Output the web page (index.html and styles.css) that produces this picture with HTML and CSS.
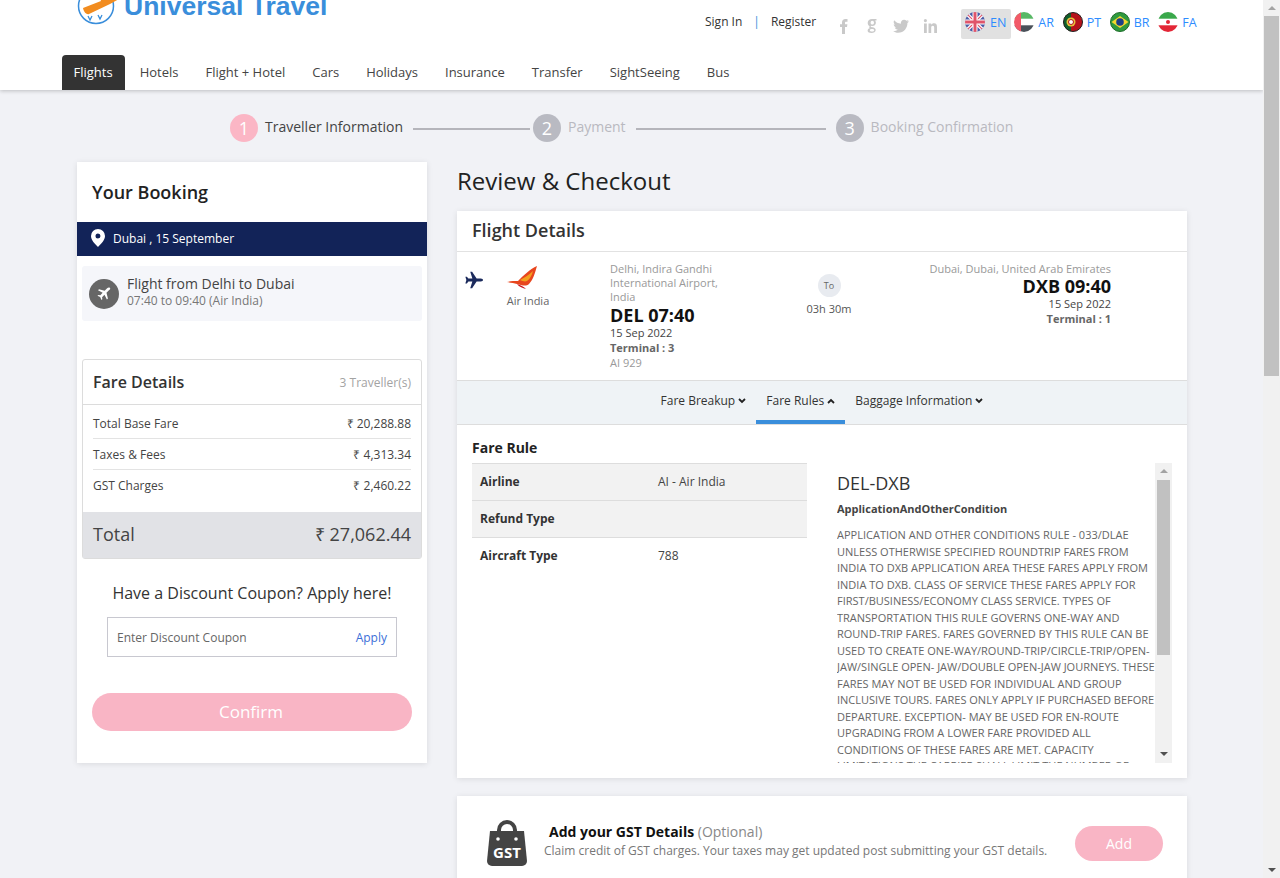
FILE: index.html
```html
<!DOCTYPE html>
<html lang="en">
<head>
<meta charset="utf-8">
<title>Review &amp; Checkout</title>
<link rel="stylesheet" href="styles.css">
</head>
<body>
<div class="page">
  <div class="main">
    <header class="header">
      <div class="top">
        <div class="logo">
          <svg class="logo-icon" width="44" height="34" viewBox="0 0 44 34"><circle cx="19" cy="15" r="17.500" fill="none" stroke="#3a8edb" stroke-width="1.500"/><path d="M11 25l2 4 2-4M21 24l2 4 2-4" fill="none" stroke="#3a8edb" stroke-width="1.300"/><path d="M6 17L24 10 22 4h5l4 4 8-3c3-1 5 1 3 3L33 13 12 23c-2 .8-5-1-6-6z" fill="#f28c1f"/></svg>
          <span class="logo-text">Universal Travel</span>
        </div>
        <div class="auth"><a>Sign In</a><span class="sep">|</span><a>Register</a></div>
        <div class="social">
          <svg width="14" height="16" viewBox="0 0 14 16"><path d="M5 16V9H3V6.300h2V4.500C5 2.300 6.300 1 8.400 1H10.500V3.700H9c-.8 0-1 .4-1 1.100V6.300h2.400L10 9H8v7z" fill="#c9c9c9"/></svg>
          <svg width="14" height="16" viewBox="0 0 14 16"><path d="M7 1H11.500V2.500H10c.6.600.9 1.400.9 2.200 0 2-1.600 3.300-3.600 3.300-.5 0-.9 0-1.300-.2-.5.400-.4 1 .2 1.200 2 .5 4.500.7 4.500 3 0 2-2 3-4.200 3-2.100 0-3.900-.7-3.900-2.500 0-1.200 1-1.900 2.100-2.200-.6-.6-.6-1.400 0-2C3.500 7.800 2.700 6.500 2.700 5 2.700 2.600 4.700 1 7 1zm.3 1.800c-1 0-1.700.8-1.700 1.900s.7 1.900 1.700 1.900 1.700-.8 1.700-1.900-.7-1.900-1.700-1.900zM7 11c-1.200 0-2.200.4-2.200 1.200S5.700 13.500 7 13.500s2.200-.5 2.200-1.300S8.300 11 7 11z" fill="#c9c9c9"/></svg>
          <svg width="16" height="16" viewBox="0 0 16 16"><path d="M16 3.300c-.6.300-1.200.4-1.900.5.700-.4 1.200-1 1.400-1.800-.6.400-1.300.6-2 .8C12.900 2.100 12 1.700 11.100 1.700c-2.100 0-3.600 1.900-3.200 4C5.200 5.600 2.800 4.300 1.100 2.300.3 3.800.7 5.700 2.100 6.700 1.600 6.700 1.100 6.500.7 6.300c0 1.500 1.100 2.900 2.600 3.200-.5.100-1 .2-1.500.1.400 1.300 1.600 2.200 3.100 2.200C3.500 12.900 1.700 13.400 0 13.200c1.500.9 3.200 1.500 5 1.500 6.100 0 9.600-5.200 9.400-9.800.7-.4 1.200-1 1.600-1.600z" fill="#c9c9c9"/></svg>
          <svg width="14" height="16" viewBox="0 0 14 16"><path d="M1 5.500h2.800V15H1zM2.400 1a1.600 1.600 0 110 3.200 1.600 1.600 0 010-3.200zM5.500 5.500h2.700v1.300c.5-.9 1.500-1.500 2.800-1.500 2.400 0 3 1.600 3 3.900V15h-2.800V9.800c0-1.200-.3-2-1.400-2-1.200 0-1.600.9-1.600 2V15H5.500z" fill="#c9c9c9"/></svg>
        </div>
        <div class="langs">
          <div class="lang active">
            <svg class="flag" width="20" height="20" viewBox="0 0 20 20"><defs><clipPath id="c1"><circle cx="10" cy="10" r="10"/></clipPath></defs><g clip-path="url(#c1)"><rect width="20" height="20" fill="#4a5ba6"/><path d="M0 0L20 20M20 0L0 20" stroke="#fff" stroke-width="3.500"/><path d="M0 0L20 20M20 0L0 20" stroke="#e0556a" stroke-width="1.200"/><path d="M10 0V20M0 10H20" stroke="#fff" stroke-width="5"/><path d="M10 0V20M0 10H20" stroke="#e0556a" stroke-width="3"/></g></svg>
            <span>EN</span>
          </div>
          <div class="lang">
            <svg class="flag" width="20" height="20" viewBox="0 0 20 20"><defs><clipPath id="c2"><circle cx="10" cy="10" r="10"/></clipPath></defs><g clip-path="url(#c2)"><rect width="20" height="20" fill="#fff"/><rect width="20" height="6.700" fill="#58b865"/><rect y="13.300" width="20" height="6.700" fill="#4a5159"/><rect width="7" height="20" fill="#f25a68"/></g></svg>
            <span>AR</span>
          </div>
          <div class="lang">
            <svg class="flag" width="20" height="20" viewBox="0 0 20 20"><defs><clipPath id="c3"><circle cx="10" cy="10" r="9.500"/></clipPath></defs><g clip-path="url(#c3)"><rect width="20" height="20" fill="#b5121b"/><rect width="8" height="20" fill="#0f5f2a"/><circle cx="8" cy="10" r="4.500" fill="#e8c33a"/><circle cx="8" cy="10" r="2.500" fill="#fff" stroke="#b5121b"/></g><circle cx="10" cy="10" r="9.500" fill="none" stroke="#222" stroke-width="1"/></svg>
            <span>PT</span>
          </div>
          <div class="lang">
            <svg class="flag" width="20" height="20" viewBox="0 0 20 20"><circle cx="10" cy="10" r="9.500" fill="#2f9a3e" stroke="#1c6b29"/><path d="M1.500 10L10 4l8.500 6L10 16z" fill="#f3d72e"/><circle cx="10" cy="10" r="3.800" fill="#1d3f87"/></svg>
            <span>BR</span>
          </div>
          <div class="lang">
            <svg class="flag" width="20" height="20" viewBox="0 0 20 20"><defs><clipPath id="c5"><circle cx="10" cy="10" r="10"/></clipPath></defs><g clip-path="url(#c5)"><rect width="20" height="20" fill="#fff"/><rect width="20" height="6.700" fill="#3aa84b"/><rect y="13.300" width="20" height="6.700" fill="#e32636"/><circle cx="10" cy="10" r="2" fill="#e32636"/></g></svg>
            <span>FA</span>
          </div>
        </div>
      </div>
      <nav class="nav">
        <a class="nav-item active">Flights</a>
        <a class="nav-item">Hotels</a>
        <a class="nav-item">Flight + Hotel</a>
        <a class="nav-item">Cars</a>
        <a class="nav-item">Holidays</a>
        <a class="nav-item">Insurance</a>
        <a class="nav-item">Transfer</a>
        <a class="nav-item">SightSeeing</a>
        <a class="nav-item">Bus</a>
      </nav>
    </header>

    <div class="stepper">
      <div class="step current"><span class="num">1</span><span class="label">Traveller Information</span></div>
      <div class="line l1"></div>
      <div class="step"><span class="num">2</span><span class="label">Payment</span></div>
      <div class="line l2"></div>
      <div class="step"><span class="num">3</span><span class="label">Booking Confirmation</span></div>
    </div>

    <div class="content">
      <aside class="booking">
        <h2 class="booking-title">Your Booking</h2>
        <div class="dest">
          <svg width="14" height="18" viewBox="0 0 14 18"><path fill-rule="evenodd" d="M7 0a7 7 0 017 7c0 4-4 8-7 11C4 15 0 11 0 7a7 7 0 017-7zm0 4.500a2.500 2.500 0 100 5 2.500 2.500 0 000-5z" fill="#fff"/></svg>
          <span>Dubai , 15 September</span>
        </div>
        <div class="trip">
          <span class="trip-icon"><svg width="16" height="16" viewBox="0 0 24 24"><path d="M21 3c-1-1-3-.8-4.300.5L13 7.200 4.500 5 3 6.500l7 3.700-3.500 3.600-3-.4L2.200 14.700l4 1.900L8.200 21l1.300-1.300-.4-3 3.600-3.500 3.700 7 1.500-1.500-2.200-8.500 3.700-3.700C20.800 5.800 22 4 21 3z" fill="#fff"/></svg></span>
          <div class="trip-info">
            <div class="trip-title">Flight from Delhi to Dubai</div>
            <div class="trip-sub">07:40 to 09:40 (Air India)</div>
          </div>
        </div>
        <div class="fare">
          <div class="fare-head"><span class="fare-title">Fare Details</span><span class="fare-count">3 Traveller(s)</span></div>
          <div class="fare-rows">
            <div class="fare-row"><span>Total Base Fare</span><span>₹ 20,288.88</span></div>
            <div class="fare-row"><span>Taxes &amp; Fees</span><span>₹ 4,313.34</span></div>
            <div class="fare-row"><span>GST Charges</span><span>₹ 2,460.22</span></div>
          </div>
          <div class="fare-total"><span>Total</span><span class="total-amt">₹ 27,062.44</span></div>
        </div>
        <div class="coupon-title">Have a Discount Coupon? Apply here!</div>
        <div class="coupon"><span>Enter Discount Coupon</span><a>Apply</a></div>
        <button class="confirm">Confirm</button>
      </aside>

      <section class="checkout">
        <h1 class="page-title">Review &amp; Checkout</h1>
        <div class="card details">
          <h2 class="details-title">Flight Details</h2>
          <div class="flight">
            <svg class="plane" width="20" height="18" viewBox="0 0 24 24"><path d="M24 12c0-1-1-2-3-2h-5.500L9.500 1H7l2.800 9H4.500L2.500 7.500H.5L1.800 12 .5 16.500h2L4.500 14h5.300L7 23h2.500l6-9H21c2 0 3-1 3-2z" fill="#1b2a5c"/></svg>
            <div class="airline">
              <svg width="30" height="24" viewBox="0 0 30 24"><path d="M30 0C28 7 26 14 22 18c-3 3-8 1-12 0-3-1-6-1-10-2 4-1 7-1 11-1C17 9 23 3 30 0z" fill="#e8461e"/><path d="M26 5c-1 4-3 8-6 10-2 1-5 0-7-1 4-2 9-5 13-9z" fill="#f3a01e"/><path d="M10 18c4 1 7 3 9 5-3-1-7-2-9-5z" fill="#c9141c"/></svg>
              <span>Air India</span>
            </div>
            <div class="from">
              <div class="airport">Delhi, Indira Gandhi International Airport, India</div>
              <div class="time">DEL 07:40</div>
              <div class="date">15 Sep 2022</div>
              <div class="terminal">Terminal : 3</div>
              <div class="fno">AI 929</div>
            </div>
            <div class="mid"><span class="to">To</span><span class="dur">03h 30m</span></div>
            <div class="dest-col">
              <div class="airport">Dubai, Dubai, United Arab Emirates</div>
              <div class="time">DXB 09:40</div>
              <div class="date">15 Sep 2022</div>
              <div class="terminal">Terminal : 1</div>
            </div>
          </div>
          <div class="tabs">
            <a class="tab">Fare Breakup <svg width="8" height="6" viewBox="0 0 8 6"><path d="M1 1l3 3 3-3" fill="none" stroke="#222" stroke-width="1.800"/></svg></a>
            <a class="tab active">Fare Rules <svg width="8" height="6" viewBox="0 0 8 6"><path d="M1 5l3-3 3 3" fill="none" stroke="#222" stroke-width="1.800"/></svg></a>
            <a class="tab">Baggage Information <svg width="8" height="6" viewBox="0 0 8 6"><path d="M1 1l3 3 3-3" fill="none" stroke="#222" stroke-width="1.800"/></svg></a>
          </div>
          <div class="rules">
            <h3 class="rules-title">Fare Rule</h3>
            <div class="rules-body">
              <div class="rule-table">
                <div class="rule-row shade"><b>Airline</b><span>AI - Air India</span></div>
                <div class="rule-row shade"><b>Refund Type</b><span></span></div>
                <div class="rule-row"><b>Aircraft Type</b><span>788</span></div>
              </div>
              <div class="rule-text">
                <div class="rule-scroll">
                  <div class="route">DEL-DXB</div>
                  <div class="cond">ApplicationAndOtherCondition</div>
                  <p class="para">APPLICATION AND OTHER CONDITIONS RULE - 033/DLAE UNLESS OTHERWISE SPECIFIED ROUNDTRIP FARES FROM INDIA TO DXB APPLICATION AREA THESE FARES APPLY FROM INDIA TO DXB. CLASS OF SERVICE THESE FARES APPLY FOR FIRST/BUSINESS/ECONOMY CLASS SERVICE. TYPES OF TRANSPORTATION THIS RULE GOVERNS ONE-WAY AND ROUND-TRIP FARES. FARES GOVERNED BY THIS RULE CAN BE USED TO CREATE ONE-WAY/ROUND-TRIP/CIRCLE-TRIP/OPEN-JAW/SINGLE OPEN- JAW/DOUBLE OPEN-JAW JOURNEYS. THESE FARES MAY NOT BE USED FOR INDIVIDUAL AND GROUP INCLUSIVE TOURS. FARES ONLY APPLY IF PURCHASED BEFORE DEPARTURE. EXCEPTION- MAY BE USED FOR EN-ROUTE UPGRADING FROM A LOWER FARE PROVIDED ALL CONDITIONS OF THESE FARES ARE MET. CAPACITY LIMITATIONS THE CARRIER SHALL LIMIT THE NUMBER OF</p>
                </div>
                <div class="sbar small">
                  <span class="arrow up"></span>
                  <div class="thumb-track"><div class="thumb"></div></div>
                  <span class="arrow down"></span>
                </div>
              </div>
            </div>
          </div>
        </div>
        <div class="card gst">
          <svg class="gst-icon" width="40" height="46" viewBox="0 0 40 46"><path d="M10 13V10a10 10 0 0120 0v3h-4V10a6 6 0 00-12 0v3z" fill="#444"/><path d="M3 11h34l3 30a5 5 0 01-5 5H5a5 5 0 01-5-5z" fill="#444"/><circle cx="11" cy="19" r="1.800" fill="#fff"/><circle cx="29" cy="19" r="1.800" fill="#fff"/><text x="20" y="38" text-anchor="middle" class="gst-label">GST</text></svg>
          <div class="gst-text">
            <div class="gst-title"><b>Add your GST Details</b> <span>(Optional)</span></div>
            <div class="gst-sub">Claim credit of GST charges. Your taxes may get updated post submitting your GST details.</div>
          </div>
          <button class="add">Add</button>
        </div>
      </section>
    </div>
  </div>
  <div class="sbar page-bar">
    <span class="arrow up"></span>
    <div class="thumb-track"><div class="thumb"></div></div>
    <span class="arrow down"></span>
  </div>
</div>
</body>
</html>
```
FILE: styles.css
```css
* { box-sizing: border-box; }
html, body { margin: 0; height: 100%; overflow: hidden; }
body { font-family: "Open Sans", "Liberation Sans", sans-serif; color: #333; background: #f1f2f6; }
h1, h2, h3, p { margin: 0; font-weight: 400; }
a { color: inherit; text-decoration: none; }
button { font-family: inherit; border: 0; }

.page { display: flex; height: 878px; overflow: hidden; }
.main { flex: 1; min-width: 0; height: 878px; overflow: hidden; }

.header { height: 90px; background: #fff; box-shadow: 0 1px 4px rgba(0,0,0,.22); position: relative; overflow: hidden; }
.top { height: 55px; padding-left: 77px; display: flex; align-items: flex-start; }
.logo { display: flex; align-items: flex-start; width: 530px; margin-top: -9px; height: 34px; }
.logo-icon { flex: none; }
.logo-text { margin: -2px 0 0 3px; font: 700 26.500px/34px "Liberation Sans", sans-serif; color: #3a8edb; white-space: nowrap; }
.auth { display: flex; gap: 10px; width: 132px; padding-top: 13px; margin-left: 98px; font-size: 12px; line-height: 17px; color: #333; }
.auth .sep { color: #3a8edb; margin: 0 1px; }
.social { display: flex; gap: 14px; padding-top: 18px; width: 124px; }
.social svg { flex: none; }
.langs { display: flex; padding-top: 9px; }
.lang { display: flex; align-items: center; gap: 4px; height: 30px; padding: 0 0 4px; margin-right: 8.700px; font-size: 12.500px; color: #2d8cff; }
.lang.active { background: #e1e1e1; padding: 0 5px 4px 4px; border-radius: 2px; margin-right: 3px; gap: 5px; }
.flag { flex: none; }

.nav { height: 35px; padding-left: 62px; display: flex; }
.nav-item { padding: 0 12px 0 11px; margin-right: 4px; line-height: 35px; font-size: 13px; color: #444; }
.nav-item.active { background: #333; color: #fff; border-radius: 4px 4px 0 0; padding: 0 12px 0 11.500px; margin-right: 4px; }

.stepper { display: flex; align-items: center; height: 30px; margin-top: 23px; padding-left: 230px; }
.step { display: flex; align-items: center; gap: 7px; font-size: 14px; color: #b9b9c0; white-space: nowrap; }
.step .label { margin-bottom: 3px; }
.step .num { width: 28px; height: 28px; border-radius: 50%; background: #b9bac2; color: #fff; font-size: 18px; line-height: 28px; text-align: center; }
.step.current .num { background: #fbb6c5; }
.step.current { color: #444; }
.line { height: 2px; background: #b5b5bb; margin: 2px 3px 0 10px; }
.l1 { width: 117px; }
.l2 { width: 190px; margin-left: 10px; margin-right: 10px; }

.content { display: flex; gap: 30px; padding: 19px 76px 0 77px; align-items: flex-start; }
.booking { flex: none; width: 350px; height: 601px; background: #fff; box-shadow: 0 1px 6px rgba(0,0,0,.1); }
.booking-title { font-size: 18px; font-weight: 600; line-height: 24px; color: #222; padding: 18px 15px 0; height: 60px; }
.dest { height: 34px; background: #122358; color: #fff; font-size: 12px; display: flex; align-items: center; gap: 8px; padding-left: 14px; }
.dest span { margin-bottom: 2px; }
.dest svg { margin-bottom: 2px; }
.trip { margin: 10px 5px 0; height: 55px; background: #f5f6fa; border-radius: 3px; display: flex; align-items: center; gap: 8px; padding-left: 7px; }
.trip-info { margin-bottom: 4px; }
.trip-icon { width: 30px; height: 30px; border-radius: 50%; background: #666; display: flex; align-items: center; justify-content: center; flex: none; }
.trip-title { font-size: 14px; line-height: 18px; color: #444; }
.trip-sub { font-size: 12px; line-height: 16px; color: #777; }
.fare { margin: 38px 5px 0; height: 200px; border: 1px solid #dcdcdc; border-radius: 3px; }
.fare-head { height: 45px; display: flex; justify-content: space-between; align-items: center; padding: 0 10px; border-bottom: 1px solid #dcdcdc; }
.fare-title { font-size: 16px; font-weight: 600; color: #333; }
.fare-count { font-size: 12px; color: #a3a3a3; }
.fare-rows { padding: 3px 10px 0; height: 107px; }
.fare-row { height: 31px; display: flex; justify-content: space-between; align-items: center; font-size: 12px; color: #444; border-bottom: 1px solid #e3e3e3; }
.fare-row:last-child { border-bottom: 0; }
.fare-total { height: 46px; background: #e1e2e6; display: flex; justify-content: space-between; align-items: center; padding: 0 10px 2px; font-size: 18px; color: #444; }
.total-amt { font-size: 18px; }
.coupon-title { margin-top: 23px; text-align: center; font-size: 16px; line-height: 22px; color: #333; }
.coupon { margin: 13px 30px 0; height: 40px; border: 1px solid #c8c8d0; display: flex; justify-content: space-between; align-items: center; padding: 0 9px; font-size: 12px; color: #666; }
.coupon a { color: #3b6fd8; }
.confirm { display: block; width: 320px; height: 38px; margin: 36px 15px 0; padding: 0 2px 2px 0; border-radius: 19px; background: #f9b5c5; color: #fff; font-size: 17px; }

.checkout { flex: 1; min-width: 0; }
.page-title { font-size: 24px; line-height: 38px; height: 49px; color: #222; }
.card { background: #fff; box-shadow: 0 1px 6px rgba(0,0,0,.1); }
.details { height: 567px; overflow: hidden; }
.details-title { height: 41px; padding: 7px 15px 0; font-size: 18px; font-weight: 600; line-height: 24px; color: #333; border-bottom: 1px solid #e2e2e2; }
.flight { height: 128px; display: flex; }
.plane { margin: 19px 0 0 7px; flex: none; }
.airline { width: 60px; margin: 14px 0 0 14px; display: flex; flex-direction: column; align-items: center; flex: none; font-size: 11px; color: #666; }
.airline svg { align-self: flex-start; margin-left: 9px; }
.airline span { margin-top: 3px; }
.from { width: 125px; margin: 10px 0 0 52px; flex: none; color: #555; }
.airport { font-size: 11px; line-height: 14px; color: #999; }
.time { font-size: 18px; font-weight: 700; line-height: 22px; color: #111; }
.date { font-size: 11px; line-height: 15px; color: #444; white-space: nowrap; }
.from .date { margin-top: -1px; }
.dest-col .time { margin-top: -1px; }
.dest-col .date { line-height: 14px; }
.terminal { font-size: 11px; font-weight: 700; line-height: 15px; color: #666; }
.fno { font-size: 11px; line-height: 15px; color: #999; }
.mid { width: 90px; margin: 22px 0 0 49px; display: flex; flex-direction: column; align-items: center; flex: none; }
.to { width: 23px; height: 23px; border-radius: 50%; background: #e8ebf0; font-size: 9px; line-height: 23px; text-align: center; color: #666; }
.dur { font-size: 11px; line-height: 15px; color: #555; margin-top: 4px; }
.dest-col { flex: 1; margin: 10px 76px 0 0; text-align: right; }
.tabs { height: 45px; background: #eff3f6; border-top: 1px solid #ddd; border-bottom: 1px solid #ddd; display: flex; justify-content: center; }
.tab { height: 43px; padding: 0 10px; line-height: 39px; font-size: 12px; color: #333; }
.tab svg { vertical-align: 1px; }
.tab.active { border-bottom: 4px solid #3a8edb; }
.rules { padding: 13px 15px 0; height: 353px; overflow: hidden; }
.rules-title { font-size: 14px; font-weight: 700; line-height: 20px; color: #222; height: 25px; }
.rules-body { display: flex; gap: 30px; }
.rule-table { flex: none; width: 335px; }
.rule-row { height: 37px; display: flex; align-items: center; font-size: 12px; color: #444; padding: 0 0 2px 8px; border-bottom: 1px solid #ddd; }
.rule-row.shade { background: #f2f2f2; }
.rule-row:first-child { border-top: 1px solid #ddd; height: 38px; }
.rule-row:last-child { border-bottom: 0; background: #fff; }
.rule-row b { width: 178px; font-weight: 700; color: #333; }
.rule-text { flex: 1; display: flex; height: 300px; min-width: 0; }
.rule-scroll { flex: 1; height: 300px; overflow: hidden; min-width: 0; }
.route { font-size: 18px; line-height: 24px; color: #333; margin-top: 8px; }
.cond { font-size: 11px; font-weight: 700; line-height: 18px; color: #444; margin-top: 5px; }
.para { font-size: 11px; line-height: 16.500px; color: #666; margin-top: 9px; }

.sbar { flex: none; width: 17px; background: #f1f1f1; display: flex; flex-direction: column; align-items: center; }
.sbar .arrow { flex: none; width: 0; height: 0; border-left: 4px solid transparent; border-right: 4px solid transparent; margin: 6px 0; }
.arrow.up { border-bottom: 4px solid #a3a3a3; }
.arrow.down { border-top: 4px solid #505050; }
.thumb-track { flex: 1; width: 100%; }
.thumb { background: #c1c1c1; margin: 0 2px; }
.small { height: 300px; }
.small .thumb { height: 175px; }
.small .arrow { margin: 6px 0 7px; }
.page-bar { height: 878px; }
.page-bar .thumb { height: 360px; margin: 0 1px; }

.gst { height: 120px; margin-top: 18px; display: flex; align-items: flex-start; padding: 24px 24px 0 30px; }
.gst-icon { flex: none; }
.gst-label { font: 700 15px "Open Sans", sans-serif; fill: #fff; }
.gst-text { flex: 1; margin-left: 17px; padding-top: 1px; }
.gst-title { font-size: 14px; line-height: 22px; color: #111; padding-left: 5px; }
.gst-title b { font-weight: 700; }
.gst-title span { color: #888; }
.gst-sub { font-size: 12px; line-height: 15px; color: #777; }
.add { width: 88px; height: 35px; margin-top: 6px; border-radius: 18px; background: #f9b5c5; color: #fff; font-size: 14px; flex: none; }
```
